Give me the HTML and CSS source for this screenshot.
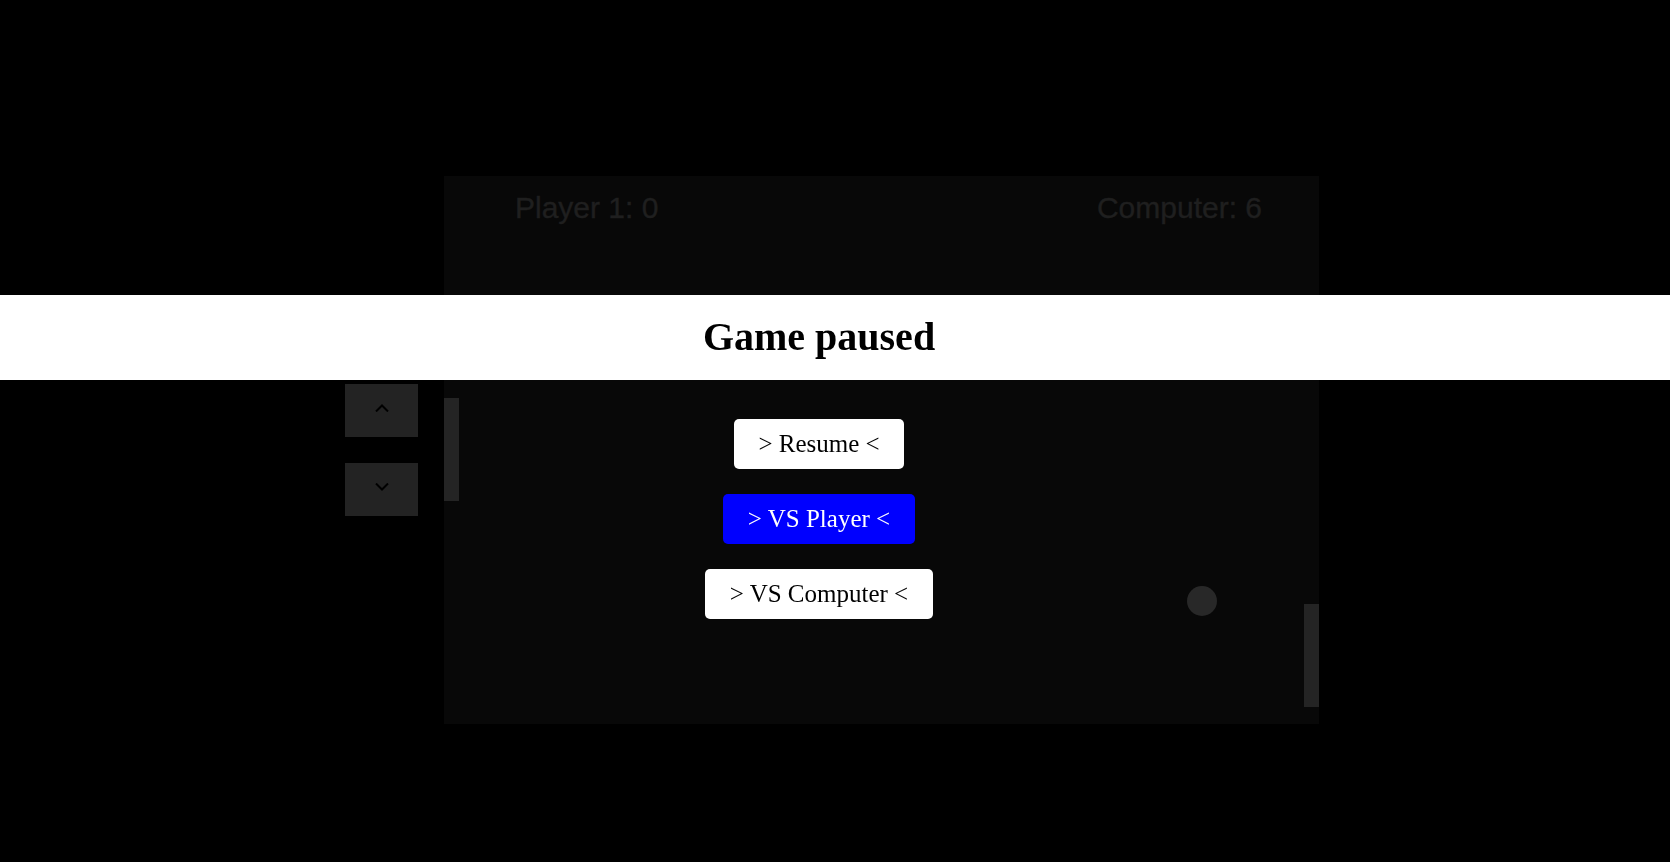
FILE: index.html
```html
<!DOCTYPE html>
<html lang="en">
<head>
<meta charset="utf-8">
<title>Pong</title>
<link rel="stylesheet" href="styles.css">
</head>
<body>
<main class="stage">
  <div class="controls">
    <button class="ctrl" aria-label="Up">
      <svg width="14" height="8" viewBox="0 0 14 8"><polyline points="1,7.5 7,1.5 13,7.5" fill="none" stroke="#000" stroke-width="2"/></svg>
    </button>
    <button class="ctrl" aria-label="Down">
      <svg width="14" height="8" viewBox="0 0 14 8"><polyline points="1,0.5 7,6.5 13,0.5" fill="none" stroke="#000" stroke-width="2"/></svg>
    </button>
  </div>
  <div class="board">
    <span class="score score-left">Player 1: 0</span>
    <span class="score score-right">Computer: 6</span>
    <div class="paddle paddle-left"></div>
    <div class="paddle paddle-right"></div>
    <div class="ball"></div>
  </div>
</main>
<div class="overlay">
  <div class="band"><h1 class="title">Game paused</h1></div>
  <div class="menu">
    <button class="menu-btn">&gt; Resume &lt;</button>
    <button class="menu-btn active">&gt; VS Player &lt;</button>
    <button class="menu-btn">&gt; VS Computer &lt;</button>
  </div>
</div>
</body>
</html>
```
FILE: styles.css
```css
html, body {
  margin: 0;
  padding: 0;
  background: #000;
  height: 100%;
  overflow: hidden;
}

.stage {
  display: flex;
  align-items: center;
  gap: 26px;
  padding: 176px 0 0 345px;
}

.controls {
  display: flex;
  flex-direction: column;
  gap: 26px;
}

.ctrl {
  width: 73px;
  height: 53px;
  border: none;
  padding: 0 0 5px 1px;
  background: #232323;
  display: flex;
  align-items: center;
  justify-content: center;
}

.board {
  position: relative;
  width: 875px;
  height: 548px;
  background: #080808;
}

.score {
  position: absolute;
  top: 17px;
  font-family: "Liberation Sans", Arial, sans-serif;
  font-size: 30px;
  line-height: 30px;
  color: #1f1f1f;
  -webkit-text-stroke: 0.4px #1f1f1f;
  white-space: nowrap;
}

.score-left { left: 71px; }
.score-right { right: 57px; }

.paddle {
  position: absolute;
  width: 15px;
  height: 103px;
  background: #242424;
}

.paddle-left { left: 0; top: 222px; }
.paddle-right { right: 0; top: 428px; }

.ball {
  position: absolute;
  left: 743px;
  top: 410px;
  width: 30px;
  height: 30px;
  border-radius: 50%;
  background: #282828;
}

.overlay {
  position: fixed;
  inset: 0;
  padding-top: 295px;
}

.band {
  background: #fff;
  height: 85px;
}

.title {
  margin: 0;
  padding-right: 32px;
  text-align: center;
  font-family: "Liberation Serif", "Times New Roman", serif;
  font-weight: bold;
  font-size: 40px;
  line-height: 83px;
  color: #000;
}

.menu {
  display: flex;
  flex-direction: column;
  align-items: center;
  gap: 25px;
  padding: 39px 32px 0 0;
}

.menu-btn {
  height: 50px;
  padding: 0 24.5px;
  border: none;
  border-radius: 5px;
  background: #fff;
  color: #000;
  font-family: "Liberation Serif", "Times New Roman", serif;
  font-size: 25px;
  line-height: 50px;
  white-space: nowrap;
}

.menu-btn.active {
  background: #0000ff;
  color: #fff;
}
```
